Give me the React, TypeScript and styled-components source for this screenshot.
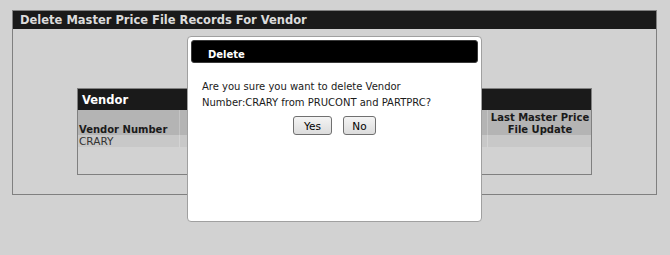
import React from 'react';
import styled, { createGlobalStyle } from 'styled-components';

const GlobalStyle = createGlobalStyle`
  html, body {
    margin: 0;
    padding: 0;
    background: #d2d2d2;
    font-family: 'DejaVu Sans', Verdana, sans-serif;
    font-size: 11px;
  }
`;

const App = () => {
  return (
    <Page>
      <GlobalStyle />
      <Panel>
        <PanelHeader>Delete Master Price File Records For Vendor</PanelHeader>
        <PanelBody>
          <VendorTable>
            <TableTitle>Vendor</TableTitle>
            <Row>
              <HeadCell>Vendor Number</HeadCell>
              <HeadCell />
              <HeadCell $center>
                Last Master Price
                <br />
                File Update
              </HeadCell>
            </Row>
            <Row $data>
              <DataCell>CRARY</DataCell>
              <DataCell />
              <DataCell />
            </Row>
          </VendorTable>
        </PanelBody>
      </Panel>

      <Dialog>
        <DialogHeader>Delete</DialogHeader>
        <Message>
          Are you sure you want to delete Vendor Number:CRARY from PRUCONT and PARTPRC?
        </Message>
        <Buttons>
          <Button $w={39}>Yes</Button>
          <Button $w={33}>No</Button>
        </Buttons>
      </Dialog>
    </Page>
  );
};

export default App;

const Page = styled.div`
  position: relative;
  width: 670px;
  height: 255px;
  padding: 10px 0 0 12px;
  box-sizing: border-box;
`;

const Panel = styled.div`
  width: 645px;
  height: 185px;
  box-sizing: border-box;
  border: 1px solid #808080;
  display: flex;
  flex-direction: column;
`;

const PanelHeader = styled.div`
  height: 18px;
  background: #1a1a1a;
  color: #dcdcdc;
  font-weight: bold;
  font-size: 11.5px;
  line-height: 19px;
  padding-left: 7px;
`;

const PanelBody = styled.div`
  flex: 1;
  display: flex;
  justify-content: center;
  padding-top: 59px;
`;

const VendorTable = styled.div`
  width: 515px;
  height: 87px;
  box-sizing: border-box;
  border: 1px solid #808080;
  display: flex;
  flex-direction: column;
`;

const TableTitle = styled.div`
  height: 21px;
  background: #1a1a1a;
  color: #ffffff;
  font-weight: bold;
  font-size: 11.5px;
  line-height: 23px;
  padding-left: 4px;
`;

const Row = styled.div<{ $data?: boolean }>`
  display: grid;
  grid-template-columns: 102px 1fr 103px;
  background: ${(p) => (p.$data ? '#c8c8c8' : '#b4b4b4')};
  height: ${(p) => (p.$data ? '12px' : '25px')};
`;

const HeadCell = styled.div<{ $center?: boolean }>`
  display: flex;
  flex-direction: column;
  justify-content: flex-end;
  text-align: ${(p) => (p.$center ? 'center' : 'left')};
  font-weight: bold;
  font-size: 10px;
  white-space: nowrap;
  color: #1a1a1a;
  line-height: 12px;
  padding-left: 1px;
  margin-bottom: -1px;
  border-right: 1px solid #c4c4c4;
  &:last-child {
    border-right: none;
  }
`;

const DataCell = styled.div`
  color: #333333;
  font-size: 10.5px;
  line-height: 13px;
  padding-left: 1px;
  border-right: 1px solid #d4d4d4;
  &:last-child {
    border-right: none;
  }
`;

const Dialog = styled.div`
  position: absolute;
  left: 187px;
  top: 36px;
  width: 295px;
  height: 186px;
  box-sizing: border-box;
  background: #ffffff;
  border: 1px solid #a0a0a0;
  border-radius: 4px;
  padding: 3px 3px 0 3px;
`;

const DialogHeader = styled.div`
  height: 23px;
  box-sizing: border-box;
  background: #000000;
  border: 1px solid #3a3a3a;
  border-radius: 3px;
  color: #ffffff;
  font-weight: bold;
  font-size: 10px;
  padding: 7px 0 0 16px;
  line-height: 13px;
`;

const Message = styled.div`
  margin: 16px 13px 0 11px;
  color: #1a1a1a;
  font-size: 10px;
  line-height: 16px;
`;

const Buttons = styled.div`
  display: flex;
  justify-content: center;
  gap: 11px;
  margin-top: 5px;
`;

const Button = styled.button<{ $w: number }>`
  width: ${(p) => p.$w}px;
  height: 19px;
  padding: 0;
  border: 1px solid #707070;
  border-radius: 3px;
  background: linear-gradient(#f4f4f4, #dcdcdc);
  font-family: 'DejaVu Sans', Verdana, sans-serif;
  font-size: 10.5px;
  color: #000;
`;
